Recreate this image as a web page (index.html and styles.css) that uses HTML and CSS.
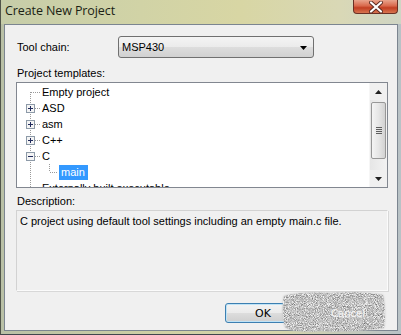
FILE: index.html
```html
<!DOCTYPE html>
<html>
<head>
<meta charset="utf-8">
<link rel="stylesheet" href="styles.css">
</head>
<body>
<div class="window">
  <div class="titlebar">
    <span class="title">Create New Project</span>
    <div class="close">
      <svg width="14" height="12" viewBox="0 0 14 12"><path d="M2 1.5 L12 10.5 M12 1.5 L2 10.5" stroke="#5a2a20" stroke-width="4" stroke-linecap="round"/><path d="M2 1.5 L12 10.5 M12 1.5 L2 10.5" stroke="#ffffff" stroke-width="2.2" stroke-linecap="round"/></svg>
    </div>
  </div>
  <div class="frame">
    <div class="client">
      <div class="row-toolchain">
        <span class="label-toolchain">Tool chain:</span>
        <div class="combo">
          <span class="combo-text">MSP430</span>
          <svg class="combo-arrow" width="7" height="4" viewBox="0 0 7 4"><path d="M0 0 H7 L3.5 4 Z" fill="#000"/></svg>
        </div>
      </div>
      <div class="label label-templates">Project templates:</div>
      <div class="tree">
        <div class="tree-list">
          <div class="tree-row">
            <svg width="25" height="16"><line x1="13.5" y1="8" x2="13.5" y2="16" class="dot"/><line x1="14" y1="8.5" x2="24" y2="8.5" class="dot"/></svg>
            <span class="node">Empty project</span>
          </div>
          <div class="tree-row">
            <svg width="25" height="16"><line x1="13.5" y1="0" x2="13.5" y2="16" class="dot"/><line x1="18" y1="8.5" x2="24" y2="8.5" class="dot"/><rect x="9.5" y="4.5" width="8" height="8" class="box"/><path d="M11 8.5 H16 M13.5 6 V11" class="sign"/></svg>
            <span class="node">ASD</span>
          </div>
          <div class="tree-row">
            <svg width="25" height="16"><line x1="13.5" y1="0" x2="13.5" y2="16" class="dot"/><line x1="18" y1="8.5" x2="24" y2="8.5" class="dot"/><rect x="9.5" y="4.5" width="8" height="8" class="box"/><path d="M11 8.5 H16 M13.5 6 V11" class="sign"/></svg>
            <span class="node">asm</span>
          </div>
          <div class="tree-row">
            <svg width="25" height="16"><line x1="13.5" y1="0" x2="13.5" y2="16" class="dot"/><line x1="18" y1="8.5" x2="24" y2="8.5" class="dot"/><rect x="9.5" y="4.5" width="8" height="8" class="box"/><path d="M11 8.5 H16 M13.5 6 V11" class="sign"/></svg>
            <span class="node">C++</span>
          </div>
          <div class="tree-row">
            <svg width="25" height="16"><line x1="13.5" y1="0" x2="13.5" y2="16" class="dot"/><line x1="18" y1="8.5" x2="24" y2="8.5" class="dot"/><rect x="9.5" y="4.5" width="8" height="8" class="box"/><path d="M11 8.5 H16" class="sign"/></svg>
            <span class="node">C</span>
          </div>
          <div class="tree-row">
            <svg width="42" height="16"><line x1="13.5" y1="0" x2="13.5" y2="16" class="dot"/><line x1="32.5" y1="0" x2="32.5" y2="8" class="dot"/><line x1="33" y1="8.5" x2="41" y2="8.5" class="dot"/></svg>
            <span class="node selected">main</span>
          </div>
          <div class="tree-row">
            <svg width="25" height="16"><line x1="13.5" y1="0" x2="13.5" y2="8" class="dot"/><line x1="14" y1="8.5" x2="24" y2="8.5" class="dot"/></svg>
            <span class="node">Externally built executable</span>
          </div>
        </div>
        <div class="scrollbar">
          <div class="sb-btn"><svg width="7" height="4" viewBox="0 0 7 4"><path d="M3.5 0 L7 4 H0 Z" fill="#222"/></svg></div>
          <div class="sb-track">
            <div class="sb-thumb">
              <svg width="6" height="7" viewBox="0 0 6 7"><path d="M0 0.5 H6 M0 2.5 H6 M0 4.5 H6 M0 6.5 H6" stroke="#5e5e5e" stroke-width="1"/></svg>
            </div>
          </div>
          <div class="sb-btn"><svg width="7" height="4" viewBox="0 0 7 4"><path d="M0 0 H7 L3.5 4 Z" fill="#222"/></svg></div>
        </div>
      </div>
      <div class="label label-desc">Description:</div>
      <div class="desc">C project using default tool settings including an empty main.c file.</div>
      <div class="buttons">
        <button class="btn btn-default">OK</button>
        <button class="btn btn-hidden">Cancel</button>
      </div>
    </div>
  </div>
  <svg class="smudge" width="106" height="42" viewBox="0 0 106 42">
    <defs>
      <filter id="noise" x="0" y="0" width="100%" height="100%" color-interpolation-filters="sRGB">
        <feTurbulence type="fractalNoise" baseFrequency="1.1" numOctaves="2" seed="7"/>
        <feColorMatrix type="matrix" values="1.1 0 0 0 0.2  1.1 0 0 0 0.2  1.1 0 0 0 0.2  0 0 0 0 0.8"/>
        <feComposite in2="SourceGraphic" operator="in"/>
      </filter>
      <filter id="soft"><feGaussianBlur stdDeviation="1"/></filter>
    </defs>
    <path d="M3 5 Q20 0 50 2 Q80 0 102 4 Q105 20 103 37 Q70 42 40 40 Q12 42 4 36 Q0 20 3 5 Z" fill="#c2c2c2" filter="url(#soft)"/>
    <path d="M3 5 Q20 0 50 2 Q80 0 102 4 Q105 20 103 37 Q70 42 40 40 Q12 42 4 36 Q0 20 3 5 Z" fill="#000" filter="url(#noise)"/>
    <rect x="58" y="13" width="36" height="13" rx="2" fill="none" stroke="#e4e4e4" stroke-width="1" opacity="0.6"/>
  </svg>
</div>
</body>
</html>
```

FILE: styles.css
```css
html, body {
  margin: 0;
  padding: 0;
}
body {
  width: 401px;
  height: 335px;
  overflow: hidden;
  font-family: "Liberation Sans", Arial, sans-serif;
  font-size: 11px;
  color: #000;
}
.window {
  position: relative;
  width: 401px;
  height: 335px;
  display: flex;
  flex-direction: column;
  background: linear-gradient(to right, #b9c0a6, #cfd0a4 40%, #d6d5ab 70%, #b8c2c6);
  border-left: 1px solid #50544a;
  border-bottom: 1px solid #40464e;
  box-sizing: border-box;
}
.titlebar {
  height: 24px;
  flex: none;
  display: flex;
  align-items: flex-start;
  justify-content: space-between;
  background: linear-gradient(to right, #c6cda9, #d1d3a6 35%, #d8d6a4 60%, #d9d8b6 85%, #cfd5c4);
}
.title {
  font-family: "Open Sans", "Noto Sans", sans-serif;
  font-size: 12.5px;
  line-height: 16px;
  color: #1b1f14;
  padding: 3px 0 0 4px;
  letter-spacing: -0.1px;
}
.close {
  width: 45px;
  height: 14px;
  margin-right: 3px;
  box-sizing: border-box;
  border: 1px solid #6a3024;
  border-top: none;
  border-radius: 0 0 4px 4px;
  background: linear-gradient(#e9a48c, #d9694c 45%, #c23f22 60%, #d7744f);
  display: flex;
  align-items: center;
  justify-content: center;
}
.frame {
  flex: 1;
  display: flex;
  padding: 0 3px 3px 3px;
}
.client {
  flex: 1;
  display: flex;
  flex-direction: column;
  background: #f0f0f0;
  border: 1px solid #7b8590;
  padding: 11px 9px 0 11px;
}
.row-toolchain {
  display: flex;
  align-items: center;
  height: 22px;
}
.label-toolchain {
  width: 102px;
  flex: none;
  padding-left: 1px;
  box-sizing: border-box;
}
.combo {
  width: 196px;
  height: 22px;
  box-sizing: border-box;
  border: 1px solid #707070;
  border-radius: 3px;
  background: linear-gradient(#f4f4f4, #ebebeb 50%, #dddddd 51%, #d1d1d1);
  display: flex;
  align-items: center;
  justify-content: space-between;
  padding: 0 6px 0 3px;
}
.combo-arrow {
  margin-top: 1px;
}
.label {
  line-height: 13px;
  height: 13px;
  padding-left: 1px;
}
.label-templates {
  margin-top: 9px;
}
.tree {
  margin-top: 2px;
  height: 106px;
  box-sizing: border-box;
  border: 1px solid #828790;
  background: #fff;
  display: flex;
}
.tree-list {
  flex: 1;
  overflow: hidden;
  padding-top: 1px;
}
.tree-row {
  display: flex;
  align-items: center;
  height: 16px;
}
.tree-row svg {
  flex: none;
  display: block;
}
.dot {
  stroke: #9a9a9a;
  stroke-width: 1;
  stroke-dasharray: 1 1;
}
.box {
  fill: #f4f4f4;
  stroke: #8d9aa8;
  stroke-width: 1;
}
.sign {
  stroke: #202a5c;
  stroke-width: 1;
  fill: none;
}
.node {
  line-height: 15px;
  padding: 0 2px 0 0;
  white-space: nowrap;
}
.node.selected {
  background: #3399ff;
  color: #fff;
  padding: 0 3px 0 2px;
}
.scrollbar {
  width: 17px;
  flex: none;
  display: flex;
  flex-direction: column;
  background: #eeeeee;
  border-left: 1px solid #f6f6f6;
}
.sb-btn {
  height: 17px;
  display: flex;
  align-items: center;
  justify-content: center;
  background: #f0f0f0;
}
.sb-track {
  flex: 1;
  padding-top: 2px;
  background: linear-gradient(to right, #e6e6e6, #f2f2f2);
}
.sb-thumb {
  width: 15px;
  height: 57px;
  margin: 0 auto;
  box-sizing: border-box;
  border: 1px solid #979797;
  border-radius: 2px;
  background: linear-gradient(to right, #f4f4f4, #e6e6e6 50%, #d2d2d2);
  display: flex;
  align-items: center;
  justify-content: center;
}
.label-desc {
  margin-top: 7px;
}
.desc {
  margin-top: 2px;
  height: 81px;
  box-sizing: border-box;
  border: 1px solid #d2d2d2;
  border-right-color: #fbfbfb;
  border-bottom-color: #fbfbfb;
  box-shadow: 1px 1px 0 #d8d8d8;
  padding: 4px 3px;
  line-height: 13px;
}
.buttons {
  margin-top: 12px;
  display: flex;
  justify-content: flex-end;
  gap: 9px;
  padding-right: 2px;
}
.btn {
  width: 76px;
  height: 20px;
  box-sizing: border-box;
  border: 1px solid #707070;
  border-radius: 3px;
  background: linear-gradient(#f3f3f3, #ebebeb 50%, #dddddd 51%, #cfcfcf);
  font-family: "DejaVu Sans", sans-serif;
  font-size: 11px;
  color: #000;
  padding: 0;
}
.btn-default {
  border-color: #3c7fb1;
  box-shadow: inset 0 0 0 1px #bfe3f6;
}
.btn-hidden {
  position: relative;
  z-index: 2;
  background: transparent;
  border-color: transparent;
  color: #f4f4f4;
  font-size: 10px;
}
.smudge {
  position: absolute;
  left: 280px;
  top: 291px;
  z-index: 1;
}
```
